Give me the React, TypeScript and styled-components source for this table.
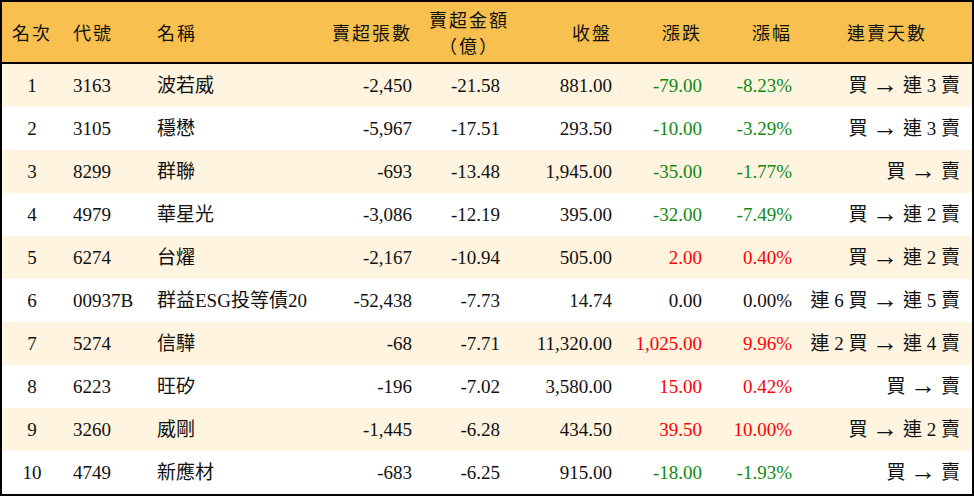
import styled, { createGlobalStyle } from 'styled-components';

interface IRankRow {
  rank: number;
  code: string;
  name: string;
  sellShares: string;
  sellAmount: string;
  close: string;
  change: string;
  pct: string;
  // streak is "before → after", e.g. ['買', '連 3 賣']
  streak: [string, string];
}

const rows: IRankRow[] = [
  { rank: 1, code: '3163', name: '波若威', sellShares: '-2,450', sellAmount: '-21.58', close: '881.00', change: '-79.00', pct: '-8.23%', streak: ['買', '連 3 賣'] },
  { rank: 2, code: '3105', name: '穩懋', sellShares: '-5,967', sellAmount: '-17.51', close: '293.50', change: '-10.00', pct: '-3.29%', streak: ['買', '連 3 賣'] },
  { rank: 3, code: '8299', name: '群聯', sellShares: '-693', sellAmount: '-13.48', close: '1,945.00', change: '-35.00', pct: '-1.77%', streak: ['買', '賣'] },
  { rank: 4, code: '4979', name: '華星光', sellShares: '-3,086', sellAmount: '-12.19', close: '395.00', change: '-32.00', pct: '-7.49%', streak: ['買', '連 2 賣'] },
  { rank: 5, code: '6274', name: '台燿', sellShares: '-2,167', sellAmount: '-10.94', close: '505.00', change: '2.00', pct: '0.40%', streak: ['買', '連 2 賣'] },
  { rank: 6, code: '00937B', name: '群益ESG投等債20', sellShares: '-52,438', sellAmount: '-7.73', close: '14.74', change: '0.00', pct: '0.00%', streak: ['連 6 買', '連 5 賣'] },
  { rank: 7, code: '5274', name: '信驊', sellShares: '-68', sellAmount: '-7.71', close: '11,320.00', change: '1,025.00', pct: '9.96%', streak: ['連 2 買', '連 4 賣'] },
  { rank: 8, code: '6223', name: '旺矽', sellShares: '-196', sellAmount: '-7.02', close: '3,580.00', change: '15.00', pct: '0.42%', streak: ['買', '賣'] },
  { rank: 9, code: '3260', name: '威剛', sellShares: '-1,445', sellAmount: '-6.28', close: '434.50', change: '39.50', pct: '10.00%', streak: ['買', '連 2 賣'] },
  { rank: 10, code: '4749', name: '新應材', sellShares: '-683', sellAmount: '-6.25', close: '915.00', change: '-18.00', pct: '-1.93%', streak: ['買', '賣'] },
];

type Tone = 'up' | 'down' | 'flat';
type Align = 'left' | 'center' | 'right';

const toneOf = (change: string): Tone => {
  if (change.startsWith('-')) {
    return 'down';
  }
  return parseFloat(change.replace(/,/g, '')) > 0 ? 'up' : 'flat';
};

const toneColor = (tone: Tone) => {
  if (tone === 'up') return '#ff0000';
  if (tone === 'down') return '#0f8a0f';
  return '#111';
};

function App() {
  return (
    <>
      <GlobalStyle />
      <Frame>
        <HeaderRow>
          <HeadCell $align='center'>名次</HeadCell>
          <HeadCell $align='left'>代號</HeadCell>
          <HeadCell $align='left' $pad={10}>名稱</HeadCell>
          <HeadCell $align='right'>賣超張數</HeadCell>
          <HeadCell $align='center' $twoLines>賣超金額<br />（億）</HeadCell>
          <HeadCell $align='right'>收盤</HeadCell>
          <HeadCell $align='right'>漲跌</HeadCell>
          <HeadCell $align='right'>漲幅</HeadCell>
          <HeadCell $align='center'>連賣天數</HeadCell>
        </HeaderRow>

        { rows.map((row, i) => {
          const tone = toneOf(row.change);
          return (
            <Row key={row.code} $shaded={i % 2 === 0}>
              <Cell $align='center'>{row.rank}</Cell>
              <Cell $align='left'>{row.code}</Cell>
              <Cell $align='left' $pad={10}>{row.name}</Cell>
              <Cell $align='right'>{row.sellShares}</Cell>
              <Cell $align='right'>{row.sellAmount}</Cell>
              <Cell $align='right'>{row.close}</Cell>
              <Cell $align='right' $tone={tone}>{row.change}</Cell>
              <Cell $align='right' $tone={tone}>{row.pct}</Cell>
              <Cell $align='right' $pad={12}>
                {row.streak[0]} <Arrow>→</Arrow> {row.streak[1]}
              </Cell>
            </Row>
          );
        })}
      </Frame>
    </>
  );
}

const COLUMNS = '60px 85px 183px 92px 88px 112px 90px 90px 170px';

const GlobalStyle = createGlobalStyle`
  body {
    margin: 0;
    background: #fff;
    font-family: "Liberation Serif", "Noto Sans CJK TC", serif;
    color: #111;
  }
`;

const Frame = styled.div`
  width: 974px;
  height: 496px;
  box-sizing: border-box;
  border: 2px solid #000;
  display: flex;
  flex-direction: column;
  background: #fff;
`;

const HeaderRow = styled.div`
  display: grid;
  grid-template-columns: ${COLUMNS};
  align-items: center;
  height: 60px;
  background: #f8c14f;
  border-bottom: 2px solid #000;
`;

const cellPadding = (align: Align, pad?: number) => {
  if (align === 'left') return `0 0 0 ${pad ?? 11}px`;
  if (align === 'right') return `0 ${pad ?? 10}px 0 0`;
  return `0 0 0 ${pad ?? 0}px`;
};

const HeadCell = styled.div<{ $align: Align; $pad?: number; $twoLines?: boolean }>`
  font-family: "Noto Sans CJK TC", sans-serif;
  font-size: 18px;
  letter-spacing: 2px;
  line-height: ${props => props.$twoLines ? '26px' : '24px'};
  white-space: nowrap;
  text-align: ${props => props.$align};
  padding: ${props => cellPadding(props.$align, props.$twoLines ? 6 : props.$pad)};
`;

const Row = styled.div<{ $shaded: boolean }>`
  display: grid;
  grid-template-columns: ${COLUMNS};
  align-items: center;
  height: 43px;
  background: ${props => props.$shaded ? '#fef4e0' : '#fff'};
`;

const Cell = styled.div<{ $align: Align; $pad?: number; $tone?: Tone }>`
  font-size: 19px;
  line-height: 24px;
  white-space: nowrap;
  text-align: ${props => props.$align};
  color: ${props => props.$tone ? toneColor(props.$tone) : '#111'};
  padding: ${props => cellPadding(props.$align, props.$pad)};
`;

const Arrow = styled.span`
  font-size: 26px;
  line-height: 0;
  vertical-align: -1px;
`;

export default App;
